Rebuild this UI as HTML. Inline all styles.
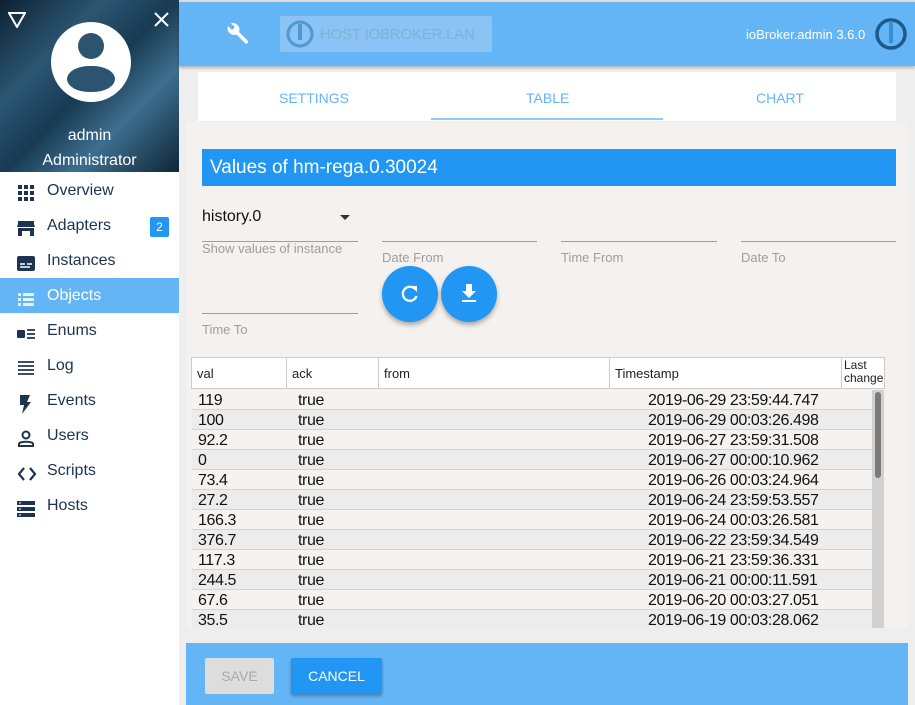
<!DOCTYPE html>
<html><head><style>
*{box-sizing:border-box;margin:0;padding:0}
body{width:915px;height:705px;overflow:hidden;background:#eee;font-family:"Liberation Sans",sans-serif;position:relative}
.abs{position:absolute}
#side{left:0;top:0;width:179px;height:705px;background:#fff}
#hdr{left:0;top:0;width:179px;height:172px;background:linear-gradient(135deg,#0d2233 0%,#2b5673 30%,#183a52 50%,#3d6f8f 70%,#0f2536 100%)}
.nav{position:absolute;left:0;width:179px;height:35px;color:#1c3450;font-size:16px}
.nav span{position:absolute;left:47px;top:9px}
.nav svg{position:absolute;left:17px;top:11px}
.sel{background:#64b5f6;color:#fff}
#top{left:179px;top:2px;width:736px;height:64px;background:#64b5f6;box-shadow:0 2px 3px rgba(0,0,0,.25)}
#tabs{left:198px;top:72px;width:698px;height:49px;background:#fff}
.tab{position:absolute;top:18px;font-size:14px;color:#64b5f6}
#panel{left:186px;top:122px;width:722px;height:506px;background:#f4f1ee}
.lbl{position:absolute;font-size:13px;color:#9e9e9e}
.line{position:absolute;height:1px;background:#9e9e9e}
.fab{position:absolute;width:56px;height:56px;border-radius:50%;background:#2196f3;box-shadow:0 3px 5px rgba(0,0,0,.3)}
.th{position:absolute;top:357px;height:32px;background:#fff;border:1px solid #ccc;font-size:13px;color:#222;padding:8px 5px}
.row{position:absolute;left:192px;width:680px;height:20px;font-size:16px;color:#111;border-bottom:1px solid #d6d2ce;letter-spacing:-.4px}
.row b{font-weight:normal;position:absolute;top:2px}
#bot{left:186px;top:643px;width:722px;height:62px;background:#64b5f6}
</style></head><body>
<div class="abs" style="left:0;top:0;width:915px;height:2px;background:#ddd"></div>
<div id="side" class="abs">
<div id="hdr" class="abs">
<svg class="abs" style="left:8px;top:12px" width="18" height="16"><path d="M1 1h16L9 15z" fill="none" stroke="#fff" stroke-width="2"/></svg>
<svg class="abs" style="left:154px;top:12px" width="15" height="15"><path d="M1 1l13 13M14 1L1 14" stroke="#fff" stroke-width="2"/></svg>
<div class="abs" style="left:51px;top:22px;width:80px;height:80px;border-radius:50%;background:#fff"></div>
<div class="abs" style="left:78px;top:33px;width:26px;height:26px;border-radius:50%;background:#2c5470"></div>
<div class="abs" style="left:67px;top:66px;width:48px;height:26px;border-radius:24px 24px 24px 24px/14px 14px 14px 14px;background:#2c5470"></div>
<div class="abs" style="left:0;top:127px;width:179px;text-align:center;color:#fff;font-size:16px">admin</div>
<div class="abs" style="left:0;top:152px;width:179px;text-align:center;color:#fff;font-size:16px">Administrator</div>
</div>
<div class="nav" style="top:173px"><svg width="18" height="18"><g fill="#1c3450"><rect x="1" y="1" width="4" height="4"/><rect x="7" y="1" width="4" height="4"/><rect x="13" y="1" width="4" height="4"/><rect x="1" y="7" width="4" height="4"/><rect x="7" y="7" width="4" height="4"/><rect x="13" y="7" width="4" height="4"/><rect x="1" y="13" width="4" height="4"/><rect x="7" y="13" width="4" height="4"/><rect x="13" y="13" width="4" height="4"/></g></svg><span>Overview</span></div>
<div class="nav" style="top:208px"><svg width="18" height="18"><path d="M1 2h16v3l1 3H0l1-3zM1 9h16v8h-4v-5H5v5H1z" fill="#1c3450"/></svg><span>Adapters</span><div class="abs" style="left:150px;top:9px;width:19px;height:20px;background:#2196f3;border-radius:2px;color:#fff;font-size:12px;text-align:center;line-height:20px">2</div></div>
<div class="nav" style="top:243px"><svg width="18" height="18"><rect x="0" y="2" width="18" height="15" rx="2" fill="#1c3450"/><path d="M3 10h5M10 10h5M3 13h10" stroke="#fff" stroke-width="1.5"/></svg><span>Instances</span></div>
<div class="nav sel" style="top:278px"><svg width="18" height="18"><path d="M1 4h3v3H1zM6 4h11v3H6zM1 9h3v3H1zM6 9h11v3H6zM1 14h3v3H1zM6 14h11v3H6z" fill="#e3f2fd"/></svg><span>Objects</span></div>
<div class="nav" style="top:313px"><svg width="18" height="18"><rect x="0" y="6" width="8" height="8" rx="1" fill="#1c3450"/><path d="M10 6h8M10 10h8M10 14h8" stroke="#1c3450" stroke-width="1.8"/></svg><span>Enums</span></div>
<div class="nav" style="top:348px"><svg width="18" height="18"><path d="M1 3h16M1 7h16M1 11h16M1 15h16" stroke="#1c3450" stroke-width="1.8"/></svg><span>Log</span></div>
<div class="nav" style="top:383px"><svg width="18" height="20"><path d="M3 1h10l-3 7h4L5 20l2-9H3z" fill="#1c3450"/></svg><span>Events</span></div>
<div class="nav" style="top:418px"><svg width="18" height="18"><circle cx="9" cy="6" r="3.5" fill="none" stroke="#1c3450" stroke-width="2"/><path d="M2 17v-2c0-3 14-3 14 0v2z" fill="none" stroke="#1c3450" stroke-width="2"/></svg><span>Users</span></div>
<div class="nav" style="top:453px"><svg width="20" height="18"><path d="M7 4L2 10l5 6M13 4l5 6-5 6" fill="none" stroke="#1c3450" stroke-width="2.2"/></svg><span>Scripts</span></div>
<div class="nav" style="top:488px"><svg width="18" height="18"><rect x="0" y="2" width="18" height="4" fill="#1c3450"/><rect x="0" y="8" width="18" height="4" fill="#1c3450"/><rect x="0" y="14" width="18" height="4" fill="#1c3450"/><path d="M2 4h2M2 10h2M2 16h2" stroke="#fff"/></svg><span>Hosts</span></div>
</div>
<div id="top" class="abs">
<svg class="abs" style="left:47px;top:20px" width="24" height="24"><path d="M22 19l-9-9c1-2 .5-5-1.5-7S7 .6 5 1.5L9 5 6 8 2 4C1 6.5 1.5 9 3.5 11s5 2.5 7 1.5l9 9c.4.4 1 .4 1.4 0l1.1-1.1c.4-.4.4-1 0-1.4z" fill="#fff"/></svg>
<div class="abs" style="left:101px;top:14px;width:212px;height:36px;background:#8ac3f4;border-radius:2px"></div>
<svg class="abs" style="left:106px;top:17px" width="30" height="30"><circle cx="15" cy="15" r="12" fill="none" stroke="#4f98d2" stroke-width="3"/><rect x="13" y="5" width="4" height="16" fill="#4f98d2"/></svg>
<div class="abs" style="left:141px;top:24px;font-size:15px;color:#82b0d6;letter-spacing:-.2px">HOST IOBROKER.LAN</div>
<div class="abs" style="left:567px;top:25px;font-size:13px;color:#fff">ioBroker.admin 3.6.0</div>
<svg class="abs" style="left:695px;top:15px" width="34" height="34"><circle cx="17" cy="17" r="14" fill="none" stroke="#1c5a8a" stroke-width="3.5"/><rect x="15" y="4" width="4" height="22" fill="#3a8ed0"/></svg>
</div>
<div id="tabs" class="abs">
<div class="tab" style="left:81px">SETTINGS</div>
<div class="tab" style="left:328px">TABLE</div>
<div class="tab" style="left:558px">CHART</div>
<div class="abs" style="left:233px;top:46px;width:232px;height:2px;background:#90caf9"></div>
</div>
<div id="panel" class="abs"></div>
<div class="abs" style="left:202px;top:149px;width:694px;height:37px;background:#2196f3;color:#fff;font-size:19px;padding:8px 8px">Values of hm-rega.0.30024</div>
<div class="abs" style="left:202px;top:208px;font-size:16px;color:#111">history.0</div>
<svg class="abs" style="left:340px;top:215px" width="10" height="6"><path d="M0 0h10L5 5z" fill="#333"/></svg>
<div class="line" style="left:202px;top:241px;width:156px"></div>
<div class="lbl" style="left:202px;top:241px">Show values of instance</div>
<div class="line" style="left:382px;top:241px;width:155px"></div><div class="lbl" style="left:382px;top:250px">Date From</div>
<div class="line" style="left:561px;top:241px;width:156px"></div><div class="lbl" style="left:561px;top:250px">Time From</div>
<div class="line" style="left:741px;top:241px;width:155px"></div><div class="lbl" style="left:741px;top:250px">Date To</div>
<div class="line" style="left:202px;top:313px;width:156px"></div><div class="lbl" style="left:202px;top:322px">Time To</div>
<div class="fab" style="left:382px;top:266px"><svg style="position:absolute;left:18px;top:18px" width="20" height="20"><path d="M15 5A7 7 0 1 0 16.5 12" fill="none" stroke="#fff" stroke-width="2.3"/><path d="M11 2h6v6z" fill="#fff"/></svg></div>
<div class="fab" style="left:441px;top:266px"><svg style="position:absolute;left:19px;top:17px" width="18" height="20"><path d="M6 1h6v7h4l-7 7-7-7h4z" fill="#fff"/><rect x="2" y="17" width="14" height="2" fill="#fff"/></svg></div>
<div class="th" style="left:191px;width:96px">val</div>
<div class="th" style="left:286px;width:93px">ack</div>
<div class="th" style="left:378px;width:232px">from</div>
<div class="th" style="left:609px;width:233px">Timestamp</div>
<div class="th" style="left:841px;width:44px;padding:1px 2px;line-height:13px;font-size:12px">Last change</div>
<div id="rows"></div>
<div class="abs" style="left:872px;top:390px;width:12px;height:238px;background:#d0d0d0"></div>
<div class="abs" style="left:875px;top:392px;width:6px;height:86px;background:#7a7a7a;border-radius:3px"></div>
<div id="bot" class="abs">
<div class="abs" style="left:19px;top:15px;width:69px;height:36px;background:#ddd;border-radius:2px;color:#a8a8a8;font-size:14px;text-align:center;line-height:36px">SAVE</div>
<div class="abs" style="left:105px;top:15px;width:91px;height:36px;background:#2196f3;border-radius:2px;color:#fff;font-size:14px;text-align:center;line-height:36px;box-shadow:0 2px 3px rgba(0,0,0,.3)">CANCEL</div>
</div>
<script>
var d=[["119","2019-06-29 23:59:44.747"],["100","2019-06-29 00:03:26.498"],["92.2","2019-06-27 23:59:31.508"],["0","2019-06-27 00:00:10.962"],["73.4","2019-06-26 00:03:24.964"],["27.2","2019-06-24 23:59:53.557"],["166.3","2019-06-24 00:03:26.581"],["376.7","2019-06-22 23:59:34.549"],["117.3","2019-06-21 23:59:36.331"],["244.5","2019-06-21 00:00:11.591"],["67.6","2019-06-20 00:03:27.051"],["35.5","2019-06-19 00:03:28.062"]];
var h="";d.forEach(function(r,i){var t=390+i*20;var hh=i==11?18:20;h+='<div class="row" style="top:'+t+'px;height:'+hh+'px;background:'+(i%2?'#ececec':'#f5f2ef')+(i==11?';border:none':'')+'"><b style="left:6px">'+r[0]+'</b><b style="left:106px">true</b><b style="left:456px">'+r[1]+'</b></div>'});
document.getElementById("rows").innerHTML=h;
</script>
</body></html>
